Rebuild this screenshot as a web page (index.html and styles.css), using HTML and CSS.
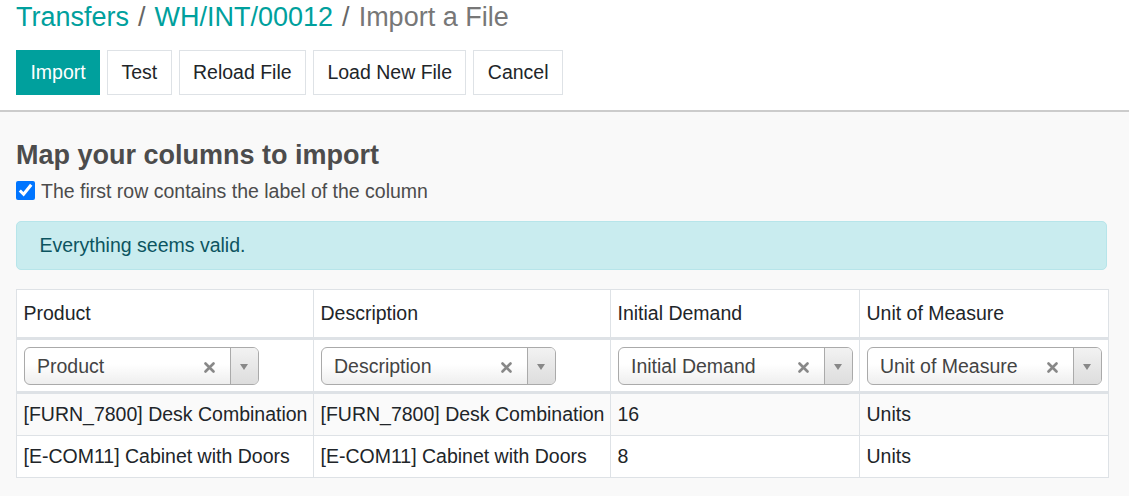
FILE: index.html
```html
<!DOCTYPE html>
<html>
<head>
<meta charset="utf-8">
<link rel="stylesheet" href="styles.css">
</head>
<body>
<div class="header">
  <div class="breadcrumb">
    <a class="crumb-link">Transfers</a><span class="sep">/</span><a class="crumb-link">WH/INT/00012</a><span class="sep">/</span><span class="crumb-current">Import a File</span>
  </div>
  <div class="buttons">
    <button class="btn btn-primary">Import</button>
    <button class="btn">Test</button>
    <button class="btn">Reload File</button>
    <button class="btn">Load New File</button>
    <button class="btn">Cancel</button>
  </div>
</div>
<div class="content">
  <h3 class="title">Map your columns to import</h3>
  <label class="check-row"><input type="checkbox" class="check" checked><span>The first row contains the label of the column</span></label>
  <div class="alert">Everything seems valid.</div>
  <table class="grid">
    <colgroup>
      <col class="c-wide"><col class="c-wide"><col class="c-narrow"><col class="c-narrow">
    </colgroup>
    <thead>
      <tr class="head-row">
        <th>Product</th><th>Description</th><th>Initial Demand</th><th>Unit of Measure</th>
      </tr>
      <tr class="select-row">
        <td><div class="sel"><span class="sel-label">Product</span><span class="sel-clear"><svg width="11" height="11" viewBox="0 0 11 11"><path d="M1.5 1.5L9.5 9.5M9.5 1.5L1.5 9.5" stroke="#888" stroke-width="2.6" stroke-linecap="round"/></svg></span><span class="sel-arrow"><svg width="8" height="6" viewBox="0 0 8 6"><path d="M0 0H8L4 6Z" fill="#888"/></svg></span></div></td>
        <td><div class="sel"><span class="sel-label">Description</span><span class="sel-clear"><svg width="11" height="11" viewBox="0 0 11 11"><path d="M1.5 1.5L9.5 9.5M9.5 1.5L1.5 9.5" stroke="#888" stroke-width="2.6" stroke-linecap="round"/></svg></span><span class="sel-arrow"><svg width="8" height="6" viewBox="0 0 8 6"><path d="M0 0H8L4 6Z" fill="#888"/></svg></span></div></td>
        <td><div class="sel"><span class="sel-label">Initial Demand</span><span class="sel-clear"><svg width="11" height="11" viewBox="0 0 11 11"><path d="M1.5 1.5L9.5 9.5M9.5 1.5L1.5 9.5" stroke="#888" stroke-width="2.6" stroke-linecap="round"/></svg></span><span class="sel-arrow"><svg width="8" height="6" viewBox="0 0 8 6"><path d="M0 0H8L4 6Z" fill="#888"/></svg></span></div></td>
        <td><div class="sel"><span class="sel-label">Unit of Measure</span><span class="sel-clear"><svg width="11" height="11" viewBox="0 0 11 11"><path d="M1.5 1.5L9.5 9.5M9.5 1.5L1.5 9.5" stroke="#888" stroke-width="2.6" stroke-linecap="round"/></svg></span><span class="sel-arrow"><svg width="8" height="6" viewBox="0 0 8 6"><path d="M0 0H8L4 6Z" fill="#888"/></svg></span></div></td>
      </tr>
    </thead>
    <tbody>
      <tr class="data-row odd">
        <td>[FURN_7800] Desk Combination</td><td>[FURN_7800] Desk Combination</td><td>16</td><td>Units</td>
      </tr>
      <tr class="data-row">
        <td>[E-COM11] Cabinet with Doors</td><td>[E-COM11] Cabinet with Doors</td><td>8</td><td>Units</td>
      </tr>
    </tbody>
  </table>
</div>
</body>
</html>
```

FILE: styles.css
```css
html, body {
  margin: 0;
  padding: 0;
}
body {
  font-family: "Liberation Sans", Arial, sans-serif;
  font-size: 19.5px;
  color: #4c4c4c;
  background: #f9f9f9;
  min-height: 496px;
}
.header {
  background: #fff;
  padding: 0 16px 15px;
  border-bottom: 2px solid #ccc;
}
.breadcrumb {
  font-size: 27px;
  line-height: 34px;
  height: 34px;
  white-space: nowrap;
}
.crumb-link {
  color: #00a09d;
  text-decoration: none;
}
.sep {
  color: #666;
  padding: 0 9px;
}
.crumb-current {
  color: #777;
}
.buttons {
  display: flex;
  gap: 7px;
  margin-top: 16px;
}
.btn {
  font-family: inherit;
  font-size: 19.5px;
  height: 45px;
  box-sizing: border-box;
  padding: 0 13.4px;
  border: 1.5px solid #dee2e6;
  background: #fff;
  color: #212529;
  border-radius: 0;
  line-height: 1;
}
.btn-primary {
  background: #00a09d;
  border-color: #00a09d;
  color: #fff;
}
.content {
  padding: 0 20px 0 16px;
}
.title {
  margin: 27px 0 0;
  font-size: 27px;
  line-height: 32.4px;
  font-weight: bold;
  color: #4c4c4c;
}
.check-row {
  display: flex;
  align-items: center;
  gap: 6px;
  margin-top: 5px;
  line-height: 29.25px;
  color: #4c4c4c;
}
.check {
  width: 19px;
  height: 19px;
  margin: 0;
  position: relative;
  top: -1px;
}
.check-row span {
  position: relative;
  top: 1px;
}
.alert {
  margin-top: 15px;
  height: 49px;
  box-sizing: border-box;
  display: flex;
  align-items: center;
  padding: 0 22.5px;
  background: #c9ecef;
  border: 1.5px solid #b7e5ea;
  border-radius: 5px;
  color: #0c5460;
  margin-right: 2px;
}
.grid {
  margin-top: 19px;
  width: 1093px;
  border-collapse: collapse;
  table-layout: fixed;
  background: #fff;
  color: #212529;
  border: 1.5px solid #dee2e6;
}
.c-wide { width: 297px; }
.c-narrow { width: 249px; }
.grid th, .grid td {
  border: 1.5px solid #dee2e6;
  padding: 0 6.5px;
  text-align: left;
  font-weight: normal;
  white-space: nowrap;
  line-height: 29.25px;
}
.head-row th {
  height: 47px;
  border-bottom: 3px solid #dee2e6;
  vertical-align: middle;
}
.select-row td {
  height: 44px;
  border-bottom: 3px solid #dee2e6;
  padding-top: 4px;
  padding-bottom: 3px;
}
.data-row td {
  height: 41px;
}
.data-row.odd td {
  background: #fafafa;
}
.sel {
  width: 235px;
  height: 38px;
  box-sizing: border-box;
  border: 1.5px solid #aaa;
  border-radius: 6px;
  background: linear-gradient(to bottom, #fff 0%, #fff 45%, #eee 100%);
  display: flex;
  align-items: center;
  color: #444;
  overflow: hidden;
}
.sel-label {
  flex: 1;
  padding-left: 12.5px;
  padding-top: 2px;
}
.sel-clear {
  width: 24px;
  margin-right: 8px;
  display: flex;
  justify-content: center;
  align-items: center;
  padding-top: 3px;
}
.sel-arrow {
  width: 27px;
  align-self: stretch;
  border-left: 1.5px solid #aaa;
  background: linear-gradient(to bottom, #f2f2f2 0%, #ddd 100%);
  display: flex;
  justify-content: center;
  align-items: center;
  padding-top: 2px;
}
```
